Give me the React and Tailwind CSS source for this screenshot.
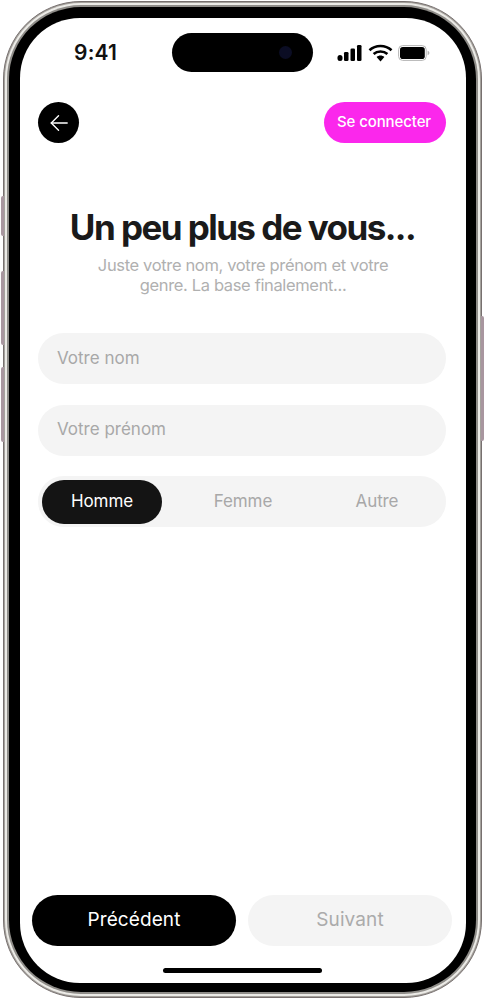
const font = "font-['Inter',sans-serif]";

function Signal() {
  return (
    <svg width="25" height="16" viewBox="0 0 25 16" className="block">
      <rect x="0.5" y="10" width="5" height="6" rx="2.5" fill="#000" />
      <rect x="7" y="7" width="4.5" height="9" rx="1.3" fill="#000" />
      <rect x="13.5" y="3.5" width="4.5" height="12.5" rx="1.3" fill="#000" />
      <rect x="20" y="0" width="4.5" height="16" rx="1.3" fill="#000" />
    </svg>
  );
}

function Wifi() {
  return (
    <svg width="25" height="18" viewBox="0 0 25 18" className="block">
      <path d="M1.5 6.2 C7.5 0.6 17.5 0.6 23.5 6.2" fill="none" stroke="#000" strokeWidth="2.6" />
      <path d="M5.6 10 C9.4 6.6 15.6 6.6 19.4 10" fill="none" stroke="#000" strokeWidth="2.6" />
      <path d="M8.6 13 L12.5 17.6 L16.4 13 C14.2 11 10.8 11 8.6 13 Z" fill="#000" />
    </svg>
  );
}

function Battery() {
  return (
    <svg width="32" height="16" viewBox="0 0 32 16" className="block">
      <rect x="0.6" y="0.6" width="27.6" height="14.8" rx="4" fill="none" stroke="#b5b5b5" strokeWidth="1" />
      <rect x="2" y="2" width="24.8" height="12" rx="2.8" fill="#000" />
      <path d="M29.6 5.8 C30.8 6.2 31.4 7 31.4 8 C31.4 9 30.8 9.8 29.6 10.2 Z" fill="#b5b5b5" />
    </svg>
  );
}

function SideKey({ className }) {
  return <div className={`absolute w-[3px] bg-[#a8969f] ${className}`} />;
}

export default function App() {
  return (
    <div className={`w-[486px] h-[1000px] bg-white overflow-hidden pt-[1px] pl-[3px] ${font}`}>
      <div className="relative w-[479px] h-[997px] rounded-[78px] bg-[#a5a29d] border border-[#77706f] p-[1px]">
        <SideKey className="-left-[3px] top-[194px] h-[40px] rounded-l-[2px]" />
        <SideKey className="-left-[3px] top-[269px] h-[74px] rounded-l-[2px]" />
        <SideKey className="-left-[3px] top-[365px] h-[75px] rounded-l-[2px]" />
        <SideKey className="-right-[3px] top-[314px] h-[125px] rounded-r-[2px]" />
        <div className="w-full h-full rounded-[76px] bg-[#ecebe7] p-[2px]">
          <div className="w-full h-full rounded-[74px] bg-[#8f8d89] p-[2px]">
            <div className="w-full h-full rounded-[72px] bg-black pt-[11px] pl-[11px] pr-[9px] pb-[11px]">
              <div className="relative w-[446px] h-[965px] rounded-[60px] bg-white overflow-hidden">
                {/* status bar */}
                <div className="flex items-center h-[39px] mt-[15px] pl-[54px]">
                  <span className="w-[98px] text-[21px] font-semibold leading-none text-[#111] tracking-[0.2px]">9:41</span>
                  <div className="relative w-[141px] h-[39px] rounded-full bg-black shrink-0">
                    <div className="absolute left-[107px] top-[13px] w-[13px] h-[13px] rounded-full bg-[#0b0d24]" />
                  </div>
                  <div className="flex items-center ml-[24px] gap-[5.5px]">
                    <Signal />
                    <Wifi />
                    <Battery />
                  </div>
                </div>

                {/* top nav */}
                <div className="flex items-center justify-between mt-[30px] pl-[18px] pr-[20px]">
                  <button className="w-[41px] h-[41px] rounded-full bg-black flex items-center justify-center">
                    <svg width="20" height="20" viewBox="0 0 22 22" fill="none" stroke="#fff" strokeWidth="1.5" strokeLinecap="round" strokeLinejoin="round">
                      <path d="M20 11 H2.5" />
                      <path d="M10.5 3 L2.5 11 L10.5 19" />
                    </svg>
                  </button>
                  <button className="w-[122px] h-[41px] pr-[2px] rounded-full bg-[#fb27ec] text-white text-[15px] font-medium tracking-[-0.1px]">
                    Se connecter
                  </button>
                </div>

                {/* heading */}
                <h1 className="mt-[64px] pr-[1px] text-center text-[35px] leading-[40px] font-bold text-[#1a1a1a] tracking-[-1.55px]">
                  Un peu plus de vous...
                </h1>
                <p className="mt-[8px] text-center text-[16.5px] leading-[20px] text-[#b0b0b0] tracking-[-0.35px]">
                  Juste votre nom, votre prénom et votre
                  <br />
                  genre. La base finalement...
                </p>

                {/* form */}
                <div className="flex flex-col gap-[20.5px] mt-[38px] ml-[18px] mr-[20px]">
                  <div className="h-[51px] rounded-full bg-[#f4f4f4] flex items-center pl-[19px] text-[17px] text-[#a8a8a8]">
                    Votre nom
                  </div>
                  <div className="h-[51px] rounded-full bg-[#f4f4f4] flex items-center pl-[19px] text-[17px] text-[#a8a8a8]">
                    Votre prénom
                  </div>
                  <div className="h-[51px] rounded-full bg-[#f4f4f4] flex items-center pl-[4px] text-[17px] tracking-[-0.1px] text-[#a8a8a8]">
                    <div className="w-[120px] h-[44px] rounded-full bg-[#141414] text-white flex items-center justify-center">Homme</div>
                    <div className="w-[162px] text-center">Femme</div>
                    <div className="w-[106px] text-center">Autre</div>
                  </div>
                </div>

                {/* bottom */}
                <div className="absolute left-[12px] right-[14px] bottom-[37px] flex gap-[12px]">
                  <button className="flex-1 h-[51px] rounded-full bg-black text-white text-[19px] tracking-[0.1px]">Précédent</button>
                  <button className="flex-1 h-[51px] rounded-full bg-[#f4f4f4] text-[#ababab] text-[19px] tracking-[0.1px]">Suivant</button>
                </div>
                <div className="absolute left-[143px] bottom-[10px] w-[159px] h-[5px] rounded-full bg-black" />
              </div>
            </div>
          </div>
        </div>
      </div>
    </div>
  );
}
